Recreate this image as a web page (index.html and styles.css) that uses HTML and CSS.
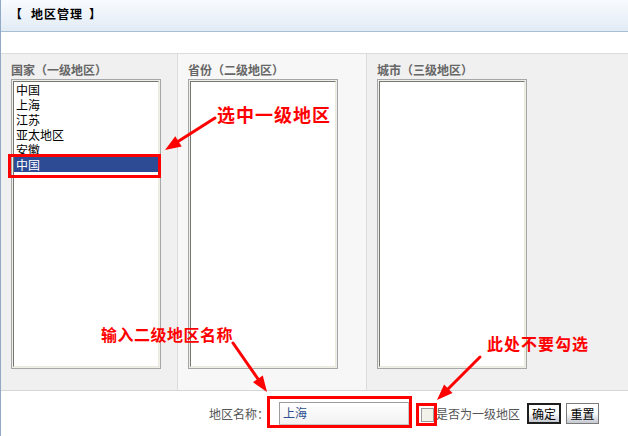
FILE: index.html
```html
<!DOCTYPE html>
<html lang="zh-CN">
<head>
    <meta charset="UTF-8">
    <title>地区管理</title>
    <link rel="stylesheet" href="styles.css">
</head>
<body>
    <div class="page">
        <div class="page-title">【<span class="title-name">地区管理</span>】</div>
        <div class="spacer"></div>

        <div class="region-columns">
            <div class="region-col">
                <div class="col-label">国家（一级地区）</div>
                <div class="listbox">
                    <div class="listbox-inner">
                        <div class="list-item">中国</div>
                        <div class="list-item">上海</div>
                        <div class="list-item">江苏</div>
                        <div class="list-item">亚太地区</div>
                        <div class="list-item">安徽</div>
                        <div class="list-item selected">中国</div>
                    </div>
                </div>
            </div>
            <div class="region-col light">
                <div class="col-label">省份（二级地区）</div>
                <div class="listbox">
                    <div class="listbox-inner"></div>
                </div>
            </div>
            <div class="region-col last">
                <div class="col-label">城市（三级地区）</div>
                <div class="listbox">
                    <div class="listbox-inner"></div>
                </div>
            </div>
        </div>

        <div class="form-bar">
            <span class="field-label">地区名称：</span>
            <div class="text-input">上海</div>
            <span class="checkbox"></span>
            <span class="check-label">是否为一级地区</span>
            <button class="btn default">确定</button>
            <button class="btn">重置</button>
        </div>

        <!-- help notes drawn on top of the form -->
        <svg class="notes" width="628" height="436" viewBox="0 0 628 436">
            <g fill="none" stroke="#ff0000" stroke-width="3">
                <rect x="9.5" y="155.5" width="150" height="21"/>
                <rect x="268.5" y="397.5" width="142" height="29"/>
                <rect x="417.5" y="404.5" width="18" height="20"/>
            </g>
            <g stroke="#ff0000" stroke-width="3" stroke-linecap="round">
                <line x1="215" y1="118" x2="178" y2="141.5"/>
                <line x1="233" y1="343" x2="258" y2="379"/>
                <line x1="480" y1="357" x2="448" y2="389"/>
            </g>
            <g fill="#ff0000">
                <polygon points="165,150 181.7,146.5 175.3,136.3"/>
                <polygon points="267,392 253,382.2 262.8,375.4"/>
                <polygon points="437,400 452.5,392.9 444.1,384.5"/>
            </g>
        </svg>
        <div class="note note-select">选中一级地区</div>
        <div class="note note-name">输入二级地区名称</div>
        <div class="note note-check">此处不要勾选</div>
    </div>
</body>
</html>
```

FILE: styles.css
```css
body {
    margin: 0;
    font-family: "Noto Sans CJK SC", "Liberation Sans", sans-serif;
    font-size: 12px;
    color: #000;
    background-color: #fff;
}

.page {
    position: relative;
    width: 627px;
    height: 436px;
    border-left: 1px solid #8fa9c6;
    overflow: hidden;
}

.page-title {
    height: 31px;
    line-height: 28px;
    padding-left: 9px;
    font-weight: bold;
    background: linear-gradient(#f8fbfe, #e2ebf5);
    border-bottom: 1px solid #a9bfd5;
}

.title-name {
    margin: 0 6px 0 9px;
    letter-spacing: 1px;
}

.spacer {
    height: 21px;
}

/* three list columns */
.region-columns {
    display: grid;
    grid-template-columns: 177px 189px 1fr;
    height: 337px;
    border-top: 1px solid #dcdcdc;
    box-sizing: border-box;
}

.region-col {
    background-color: #f0f0f0;
    border-right: 1px solid #dcdcdc;
    padding: 8px 10px 0 10px;
    box-sizing: border-box;
}

.region-col.light {
    background-color: #f7f7f7;
}

.region-col.last {
    border-right: none;
}

.col-label {
    height: 16px;
    line-height: 16px;
    margin-bottom: 1px;
    color: #666;
    font-weight: bold;
}

.listbox {
    width: 150px;
    height: 290px;
    border: 1px solid #a6a6a6;
    padding: 1px;
    background-color: #eeeeea;
    box-sizing: border-box;
}

.listbox-inner {
    height: 100%;
    background-color: #fff;
    border-top: 1px solid #77776f;
    border-left: 1px solid #77776f;
    border-bottom: 1px solid #ecead8;
    border-right: 1px solid #ecead8;
    box-sizing: border-box;
    overflow: hidden;
}

.list-item {
    height: 15px;
    line-height: 15px;
    padding-left: 2px;
}

.list-item.selected {
    background-color: #2d4a94;
    color: #fff;
}

/* bottom form row */
.form-bar {
    display: flex;
    align-items: center;
    justify-content: flex-end;
    height: 45px;
    padding-right: 29px;
    border-top: 1px solid #d6d6d6;
}

.field-label,
.check-label {
    color: #555;
}

.field-label {
    margin-right: 10px;
}

.text-input {
    width: 130px;
    height: 23px;
    line-height: 20px;
    padding-left: 3px;
    color: #2e4f8e;
    border: 1px solid #9c9c9c;
    border-bottom-color: #c8c8c8;
    border-right-color: #c8c8c8;
    background: linear-gradient(#fff, #f2f2f2);
    box-sizing: border-box;
}

.checkbox {
    width: 13px;
    height: 14px;
    margin: 2px 2px 0 12px;
    border: 1px solid #9a9a9a;
    background-color: #f3f2ea;
    box-sizing: border-box;
}

.btn {
    height: 21px;
    padding: 0 2px;
    font-family: inherit;
    font-size: 12px;
    line-height: 17px;
    color: #000;
    border: 1px solid #7b7b7b;
    background: linear-gradient(#fff 45%, #c4c8d0);
    box-sizing: border-box;
}

.btn.default {
    width: 34px;
    margin-left: 7px;
    border: 2px solid #1e1e1e;
}

.btn + .btn {
    width: 33px;
    margin-left: 5px;
}

/* red help notes */
.notes {
    position: absolute;
    left: -1px;
    top: 0;
    pointer-events: none;
}

.note {
    position: absolute;
    color: #ff0000;
    font-weight: bold;
    white-space: nowrap;
}

.note-select {
    left: 216px;
    top: 101px;
    font-size: 18px;
    letter-spacing: 1px;
}

.note-name {
    left: 100px;
    top: 322px;
    font-size: 16px;
    letter-spacing: 0.5px;
}

.note-check {
    left: 486px;
    top: 331px;
    font-size: 16px;
    letter-spacing: 1px;
}
```
